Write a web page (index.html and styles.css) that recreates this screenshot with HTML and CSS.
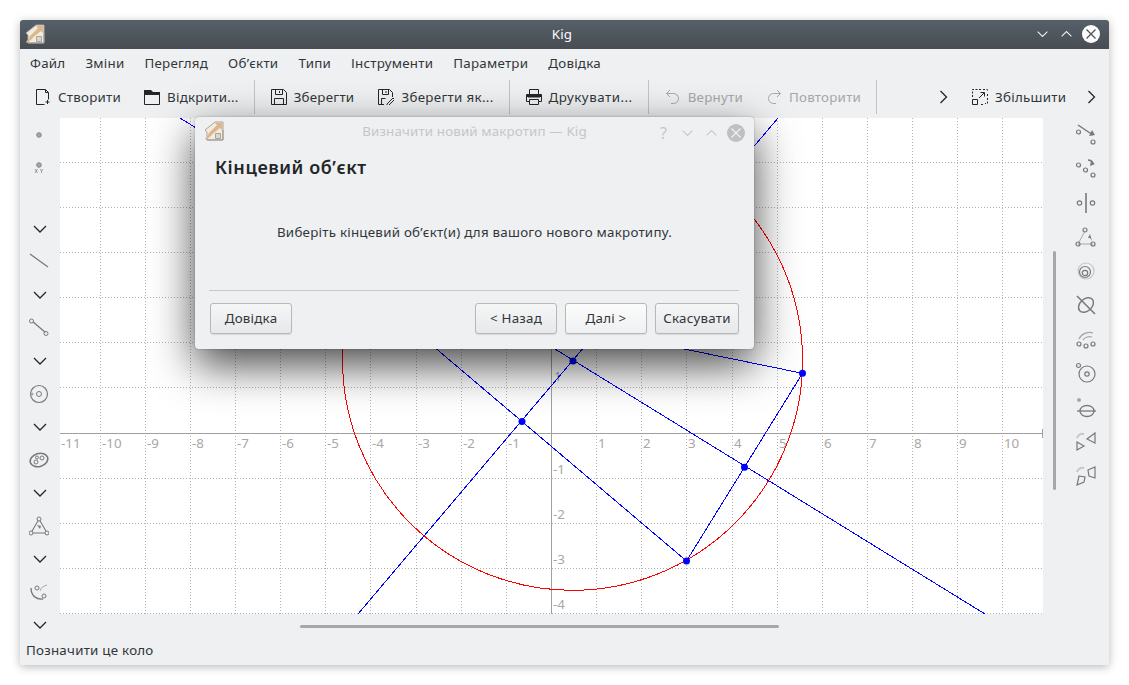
FILE: index.html
```html
<!DOCTYPE html>
<html lang="uk">
    <head>
        <meta charset="utf-8" />
        <meta name="viewport" content="width=device-width, initial-scale=1" />
        <title>Kig</title>
        <link rel="stylesheet" href="styles.css">
    </head>
    <body>
        <svg class="defs" width="0" height="0">
            <symbol id="logo" viewBox="0 0 20 20">
                <path d="M1 9 11 1h8v18H3V11z" fill="#f3ebdd" stroke="#a9a39a" stroke-width="1"/>
                <path d="M11 2h7v7l-2-2-10 8-2-2 9-9z" fill="#dcb68d"/>
                <path d="M1 18 6 12l2 2-6 5z" fill="#dcb68d"/>
                <path d="M11.500 12.500h5v5h-5z" fill="#d9d7d2" stroke="#a9a39a" stroke-width="1"/>
                <path d="M3 19h16V9" fill="none" stroke="#9a9a96" stroke-width="1"/>
            </symbol>
            <symbol id="chev-down" viewBox="0 0 16 10"><path d="M2 2l6 6 6-6" fill="none" stroke="currentColor" stroke-width="1.300"/></symbol>
            <symbol id="chev-up" viewBox="0 0 16 10"><path d="M2 8l6-6 6 6" fill="none" stroke="currentColor" stroke-width="1.300"/></symbol>
        </svg>

        <div class="window">
            <header class="titlebar">
                <svg class="logo"><use href="#logo"/></svg>
                <span class="titlebar-name">Kig</span>
                <div class="wm-buttons">
                    <svg class="wm-chev"><use href="#chev-down"/></svg>
                    <svg class="wm-chev"><use href="#chev-up"/></svg>
                    <svg class="wm-close" viewBox="0 0 18 18"><circle cx="9" cy="9" r="9" fill="#fcfcfc"/><path d="M4.500 4.500l9 9m0-9l-9 9" stroke="#4d5359" stroke-width="1.300"/></svg>
                </div>
            </header>

            <nav class="menubar">
                <span>Файл</span><span>Зміни</span><span>Перегляд</span><span>Об’єкти</span><span>Типи</span><span>Інструменти</span><span>Параметри</span><span>Довідка</span>
            </nav>

            <div class="toolbar">
                <div class="tool">
                    <svg class="tool-ico" viewBox="0 0 16 16"><path d="M1.500 15.500V.5h9l3 3v7M1.500 15.500h8M10.500.5v3h3M12.500 11v4M10.500 13h4" fill="none" stroke="#232629"/></svg>
                    <span>Створити</span>
                </div>
                <div class="tool">
                    <svg class="tool-ico" viewBox="0 0 16 16"><path d="M.5 1.500h6l2 2h7v12H.5z" fill="none" stroke="#232629"/><path d="M0 1h7l2 2h7v3H0z" fill="#232629"/></svg>
                    <span>Відкрити...</span>
                </div>
                <i class="sep"></i>
                <div class="tool">
                    <svg class="tool-ico" viewBox="0 0 16 16"><path d="M.5.5h12l3 3v12H.5zM4.500.5v5h7v-5M3.500 15.500v-6h9v6M8.500 2v2" fill="none" stroke="#232629"/></svg>
                    <span>Зберегти</span>
                </div>
                <div class="tool tool-saveas">
                    <svg class="tool-ico" viewBox="0 0 16 16"><path d="M6 15.500H.5V.5h11l3 3V8M4.500.5v5h6v-5M3.500 15.500v-6h4M8 2v2" fill="none" stroke="#232629"/><path d="M9 15l6-6 1.500 1.500-6 6H9z" fill="none" stroke="#232629"/></svg>
                    <span>Зберегти як...</span>
                </div>
                <i class="sep"></i>
                <div class="tool tool-print">
                    <svg class="tool-ico" viewBox="0 0 16 16"><path d="M3.500 5V.5h9V5M3.500 12.500h-3v-7h15v7h-3M3.500 10.500h9v5h-9zM2 8h12" fill="none" stroke="#232629"/><path d="M1 6h14v2H1z" fill="#232629"/></svg>
                    <span>Друкувати...</span>
                </div>
                <i class="sep"></i>
                <div class="tool tool-off">
                    <svg class="tool-ico" viewBox="0 0 16 16"><path d="M1.500 4.500h7a5 5 0 0 1 0 10H6M1.500 4.500 5 1M1.500 4.500 5 8" fill="none" stroke="#a5a7a9"/></svg>
                    <span>Вернути</span>
                </div>
                <div class="tool tool-off">
                    <svg class="tool-ico" viewBox="0 0 16 16"><path d="M14.500 4.500h-7a5 5 0 0 0 0 10H10M14.500 4.500 11 1M14.500 4.500 11 8" fill="none" stroke="#a5a7a9"/></svg>
                    <span>Повторити</span>
                </div>
                <i class="sep"></i>
                <svg class="more more-first" viewBox="0 0 8 14"><path d="M1 1l6 6-6 6" fill="none" stroke="#232629" stroke-width="1.300"/></svg>
                <div class="tool tool-zoom">
                    <svg class="tool-ico" viewBox="0 0 16 16"><path d="M5.500.5H.5V9M7 .5h2M11 .5h4.500V3M15.500 5v2M15.500 9v5.500H13M11 15.500H8" fill="none" stroke="#232629" stroke-dasharray="2 1.500"/><path d="M.5 10.500h5v5h-5zM7 9l5-5M8.500 3.500h4v4" fill="none" stroke="#232629"/></svg>
                    <span>Збільшити</span>
                </div>
                <svg class="more" viewBox="0 0 8 14"><path d="M1 1l6 6-6 6" fill="none" stroke="#232629" stroke-width="1.300"/></svg>
            </div>

            <div class="workspace">
                <aside class="side-left">
                    <div class="slot"><svg class="geo" viewBox="0 0 20 20"><circle cx="10" cy="10" r="2.300" fill="#a5a7a9" stroke="#85888a"/></svg></div>
                    <div class="slot"><svg class="geo" viewBox="0 0 20 20"><circle cx="10" cy="7" r="2.300" fill="#a5a7a9" stroke="#85888a"/><path d="M6 11l2.500 4m0-4L6 15M11 11l1.500 2 1.500-2m-1.500 2v2" fill="none" stroke="#77797b" stroke-width=".7"/></svg></div>
                    <div class="slot slot-gap"><svg class="chev"><use href="#chev-down"/></svg></div>
                    <div class="slot"><svg class="geo" viewBox="0 0 20 20"><path d="M1 2l18 13" stroke="#77797b" stroke-width="1.300"/></svg></div>
                    <div class="slot"><svg class="chev"><use href="#chev-down"/></svg></div>
                    <div class="slot"><svg class="geo" viewBox="0 0 20 20"><path d="M3 3l14 12" stroke="#77797b" stroke-width="1.300"/><circle cx="2.500" cy="3" r="2" fill="#eff0f1" stroke="#77797b"/><circle cx="17" cy="15.500" r="2" fill="#eff0f1" stroke="#77797b"/></svg></div>
                    <div class="slot"><svg class="chev"><use href="#chev-down"/></svg></div>
                    <div class="slot"><svg class="geo" viewBox="0 0 20 20"><circle cx="10" cy="10" r="8.500" fill="none" stroke="#77797b" stroke-width="1.200"/><circle cx="10" cy="10" r="2.500" fill="none" stroke="#77797b"/><circle cx="3" cy="10" r="1.500" fill="#a5a7a9"/></svg></div>
                    <div class="slot"><svg class="chev"><use href="#chev-down"/></svg></div>
                    <div class="slot"><svg class="geo" viewBox="0 0 20 20"><ellipse cx="10" cy="10" rx="9" ry="6.500" transform="rotate(-18 10 10)" fill="none" stroke="#77797b" stroke-width="1.600"/><circle cx="7" cy="12" r="2" fill="none" stroke="#77797b"/><circle cx="13" cy="8" r="2" fill="none" stroke="#77797b"/><circle cx="8" cy="7.500" r="1.500" fill="none" stroke="#77797b"/></svg></div>
                    <div class="slot"><svg class="chev"><use href="#chev-down"/></svg></div>
                    <div class="slot"><svg class="geo" viewBox="0 0 20 20"><path d="M10 3 2 17h16z" fill="none" stroke="#77797b" stroke-width="1.100"/><circle cx="10" cy="3" r="2" fill="#eff0f1" stroke="#77797b"/><circle cx="2" cy="17" r="2" fill="#eff0f1" stroke="#77797b"/><circle cx="18" cy="17" r="2" fill="#eff0f1" stroke="#77797b"/><path d="M8 9l4 1-1 3z" fill="#77797b"/></svg></div>
                    <div class="slot"><svg class="chev"><use href="#chev-down"/></svg></div>
                    <div class="slot"><svg class="geo" viewBox="0 0 20 20"><path d="M2 6c0 8 6 12 12 11" fill="none" stroke="#77797b" stroke-width="1.400"/><path d="M11 9c1-3 3-5 7-6" fill="none" stroke="#a5a7a9"/><circle cx="8" cy="6" r="2" fill="none" stroke="#77797b"/><circle cx="15" cy="14" r="2" fill="none" stroke="#77797b"/></svg></div>
                    <div class="slot"><svg class="chev"><use href="#chev-down"/></svg></div>
                </aside>

                <div class="centre">
                    <svg class="canvas" viewBox="60 118 983 496" xmlns="http://www.w3.org/2000/svg">
                        <g class="grid">
                            <path d="M100.500 118V614M145.500 118V614M190.500 118V614M235.500 118V614M280.500 118V614M325.500 118V614M370.500 118V614M416.500 118V614M461.500 118V614M506.500 118V614M596.500 118V614M641.500 118V614M686.500 118V614M732.500 118V614M777.500 118V614M822.500 118V614M867.500 118V614M912.500 118V614M957.500 118V614M1002.500 118V614"/>
                            <path d="M60 162.500H1043M60 207.500H1043M60 252.500H1043M60 297.500H1043M60 342.500H1043M60 387.500H1043M60 478.500H1043M60 523.500H1043M60 568.500H1043M60 613.500H1043"/>
                        </g>
                        <path class="axis" d="M60 433.500H1043M551.500 118V614M1042.500 429V438"/>
                        <g class="num">
                            <text x="61" y="448">-11</text><text x="102" y="448">-10</text><text x="147" y="448">-9</text><text x="192" y="448">-8</text><text x="237" y="448">-7</text><text x="282" y="448">-6</text><text x="327" y="448">-5</text><text x="372" y="448">-4</text><text x="418" y="448">-3</text><text x="463" y="448">-2</text><text x="508" y="448">-1</text>
                            <text x="598" y="448">1</text><text x="643" y="448">2</text><text x="688" y="448">3</text><text x="734" y="448">4</text><text x="779" y="448">5</text><text x="824" y="448">6</text><text x="869" y="448">7</text><text x="914" y="448">8</text><text x="959" y="448">9</text><text x="1004" y="448">10</text>
                            <text x="554" y="381">1</text><text x="553" y="474">-1</text><text x="553" y="519">-2</text><text x="553" y="564">-3</text><text x="553" y="609">-4</text>
                        </g>
                        <circle class="curve" cx="572.600" cy="360.300" r="230"/>
                        <g class="lines">
                            <path d="M180 118 985 614M358 614 778 118"/>
                            <path d="M357.500 282 802.500 373.300 686.500 561z"/>
                        </g>
                        <g class="dots">
                            <circle cx="802.500" cy="373.300" r="3.500"/><circle cx="686.500" cy="561" r="3.500"/><circle cx="744.500" cy="467.300" r="3.500"/><circle cx="522" cy="421.500" r="3.500"/><circle cx="573" cy="361" r="3.500"/>
                        </g>
                    </svg>
                    <div class="hscroll"></div>
                </div>

                <aside class="side-right">
                    <div class="vscroll"></div>
                    <div class="side-right-icons">
                        <div class="slot-r"><svg class="geo" viewBox="0 0 22 22"><path d="M3 1l15 10" stroke="#77797b" stroke-width="1.500"/><path d="M14 12l6-1-3-5z" fill="#77797b"/><circle cx="3.500" cy="8" r="2" fill="none" stroke="#77797b"/><circle cx="18" cy="18" r="2" fill="none" stroke="#77797b"/></svg></div>
                        <div class="slot-r"><svg class="geo" viewBox="0 0 22 22"><circle cx="3.500" cy="7" r="2" fill="none" stroke="#77797b"/><circle cx="10.500" cy="12" r="2" fill="none" stroke="#77797b"/><circle cx="18" cy="17" r="2" fill="none" stroke="#77797b"/><path d="M13 2c3 0 4 1 5 3" fill="none" stroke="#77797b" stroke-width="1.500"/><path d="M15 8l5-2-4-3z" fill="#77797b"/></svg></div>
                        <div class="slot-r"><svg class="geo" viewBox="0 0 22 22"><path d="M11 1v20" stroke="#77797b" stroke-width="1.600"/><circle cx="4.500" cy="11" r="2.200" fill="none" stroke="#77797b"/><circle cx="17.500" cy="11" r="2.200" fill="none" stroke="#77797b"/></svg></div>
                        <div class="slot-r"><svg class="geo" viewBox="0 0 22 22"><path d="M10 5 3 18h15" fill="none" stroke="#a5a7a9"/><circle cx="10" cy="4" r="2" fill="none" stroke="#77797b"/><circle cx="3" cy="18" r="2" fill="none" stroke="#77797b"/><circle cx="18" cy="18" r="2" fill="none" stroke="#77797b"/><path d="M15 8l2 7-2-3-2 0z" fill="#77797b"/></svg></div>
                        <div class="slot-r"><svg class="geo" viewBox="0 0 22 22"><circle cx="11" cy="11" r="8" fill="none" stroke="#c4c6c8"/><circle cx="10" cy="12" r="5.500" fill="none" stroke="#77797b" stroke-width="1.500"/><circle cx="10" cy="13" r="2.700" fill="none" stroke="#77797b" stroke-width="1.500"/></svg></div>
                        <div class="slot-r"><svg class="geo" viewBox="0 0 22 22"><ellipse cx="11" cy="11" rx="8.500" ry="6" transform="rotate(-42 11 11)" fill="none" stroke="#77797b" stroke-width="1.500"/><path d="M2 2l18 18" stroke="#77797b" stroke-width="1.600"/></svg></div>
                        <div class="slot-r"><svg class="geo" viewBox="0 0 22 22"><path d="M4 11c2-5 9-8 14-6M8 12c2-3 6-4 9-3" fill="none" stroke="#a5a7a9" stroke-width="1.200"/><circle cx="4" cy="16" r="2" fill="none" stroke="#77797b"/><circle cx="11" cy="18" r="2" fill="none" stroke="#77797b"/><circle cx="18" cy="16" r="2" fill="none" stroke="#77797b"/></svg></div>
                        <div class="slot-r"><svg class="geo" viewBox="0 0 22 22"><circle cx="12" cy="12" r="8" fill="none" stroke="#77797b" stroke-width="1.500"/><circle cx="12" cy="12" r="2.200" fill="none" stroke="#77797b"/><circle cx="3.500" cy="3.500" r="2" fill="none" stroke="#77797b"/></svg></div>
                        <div class="slot-r"><svg class="geo" viewBox="0 0 22 22"><ellipse cx="12" cy="15" rx="7" ry="5.500" fill="none" stroke="#77797b" stroke-width="1.300"/><path d="M2 15h19" stroke="#77797b" stroke-width="1.300"/><circle cx="4" cy="4" r="2" fill="#a5a7a9"/></svg></div>
                        <div class="slot-r"><svg class="geo" viewBox="0 0 22 22"><path d="M20 3 12 9l8 4z" fill="none" stroke="#77797b" stroke-width="1.200"/><path d="M2 12l7 4-7 4z" fill="none" stroke="#77797b" stroke-width="1.200"/><path d="M2 8c1-3 4-5 7-4" fill="none" stroke="#c4c6c8" stroke-width="2"/></svg></div>
                        <div class="slot-r"><svg class="geo" viewBox="0 0 22 22"><path d="M13 6l7-3v11l-6-2z" fill="none" stroke="#77797b" stroke-width="1.200"/><path d="M4 12l6 1-1 5-7 3z" fill="none" stroke="#77797b" stroke-width="1.200"/><path d="M2 8c1-3 4-5 7-4" fill="none" stroke="#c4c6c8" stroke-width="2"/></svg></div>
                    </div>
                </aside>
            </div>

            <footer class="statusbar">Позначити це коло</footer>

            <section class="dialog">
                <div class="dialog-title">
                    <svg class="logo"><use href="#logo"/></svg>
                    <span class="dialog-name">Визначити новий макротип — Kig</span>
                    <div class="wm-buttons">
                        <span class="wm-help">?</span>
                        <svg class="wm-chev"><use href="#chev-down"/></svg>
                        <svg class="wm-chev"><use href="#chev-up"/></svg>
                        <svg class="wm-close" viewBox="0 0 18 18"><circle cx="9" cy="9" r="9" fill="#bdc1c4"/><path d="M4.500 4.500l9 9m0-9l-9 9" stroke="#eff0f1" stroke-width="1.300"/></svg>
                    </div>
                </div>
                <h2 class="dialog-head">Кінцевий об’єкт</h2>
                <p class="dialog-text">Виберіть кінцевий об’єкт(и) для вашого нового макротипу.</p>
                <hr class="dialog-rule">
                <div class="dialog-buttons">
                    <button class="btn">Довідка</button>
                    <span class="btn-space"></span>
                    <button class="btn">&lt; Назад</button>
                    <button class="btn btn-default">Далі &gt;</button>
                    <button class="btn btn-wide">Скасувати</button>
                </div>
            </section>
        </div>
    </body>
</html>
```

FILE: styles.css
```css
* { box-sizing: border-box; margin: 0; padding: 0; }
html, body { height: 100%; overflow: hidden; }
body {
    background: #fff;
    padding: 20px;
    font-family: "Noto Sans", "Open Sans", sans-serif;
    font-size: 13.33px;
    letter-spacing: .25px;
    color: #31363b;
}
.defs { position: absolute; }

.window {
    position: relative;
    width: 1089px;
    height: 645px;
    display: flex;
    flex-direction: column;
    background: #eff0f1;
    border-radius: 3px 3px 2px 2px;
    box-shadow: 0 2px 10px rgba(0, 0, 0, .28);
}

/* title bar */
.titlebar {
    position: relative;
    height: 29px;
    flex: none;
    display: flex;
    align-items: center;
    justify-content: center;
    padding: 0 5px 2px 0;
    background: linear-gradient(#566069, #474d52);
    border-radius: 3px 3px 0 0;
    color: #fcfcfc;
}
.logo { position: absolute; left: 5px; top: 4px; width: 20px; height: 20px; }
.wm-buttons {
    position: absolute;
    right: 9px;
    top: 5px;
    display: flex;
    align-items: center;
    gap: 11px;
    color: #eff0f1;
}
.wm-chev { width: 13px; height: 18px; }
.wm-close { width: 18px; height: 18px; margin-left: -2px; }

/* menu */
.menubar {
    height: 29px;
    flex: none;
    display: flex;
    align-items: center;
    padding: 0 0 2px 10px;
    gap: 20px;
}

/* toolbar */
.toolbar {
    height: 40px;
    flex: none;
    display: flex;
    align-items: center;
    padding: 0 0 3px 4px;
}
.tool {
    display: flex;
    align-items: center;
    gap: 7px;
    padding: 0 11px;
    white-space: nowrap;
}
.tool + .tool { margin-left: 1px; }
.tool-ico { width: 16px; height: 16px; flex: none; }
.tool-off { color: #a5a7a9; }
.tool + .tool-saveas { margin-left: 2px; letter-spacing: .32px; }
.tool-print { letter-spacing: .5px; }
.sep { width: 1px; height: 34px; background: #c2c4c5; margin: 0 5px 0 4px; }
.more { width: 9px; height: 14px; flex: none; }
.more-first { margin-left: 57px; }
.tool-zoom { margin-left: 13px; margin-right: 10px; }

/* main area */
.workspace { flex: 1; display: flex; min-height: 0; }
.side-left { width: 40px; flex: none; }
.slot { height: 33px; display: flex; align-items: center; justify-content: center; }
.slot-gap { margin-top: 28px; }
.geo { width: 20px; height: 20px; margin-left: -2px; }
.chev { width: 16px; height: 10px; margin-left: -1px; color: #232629; }

.centre { width: 983px; flex: none; }
.canvas { display: block; width: 983px; height: 496px; background: #fff; }
.grid path { fill: none; stroke: #b4b4b4; stroke-dasharray: 1 2; shape-rendering: crispEdges; }
.axis { fill: none; stroke: #a0a0a0; shape-rendering: crispEdges; }
.num text { font-size: 13.33px; letter-spacing: 0; fill: #a8a8a8; }
.curve { fill: none; stroke: #ff0000; stroke-width: 1; shape-rendering: crispEdges; }
.lines path { fill: none; stroke: #0000ff; stroke-width: 1; shape-rendering: crispEdges; }
.dots circle { fill: #0000ff; }
.hscroll { width: 479px; height: 3px; margin: 11px 0 0 240px; background: #a5a7a8; border-radius: 2px; }

.side-right { flex: 1; display: flex; }
.vscroll { width: 3px; height: 239px; margin: 133px 0 0 10px; background: #a5a7a8; border-radius: 2px; }
.side-right-icons { width: 46px; margin-left: 7px; }
.slot-r { height: 34px; display: flex; align-items: center; justify-content: center; }
.slot-r .geo { width: 22px; height: 22px; margin: 0; }
.slot-r circle { stroke-width: 1.200; }

.statusbar { height: 27px; flex: none; padding: 3px 0 0 6px; }

/* dialog */
.dialog {
    position: absolute;
    left: 175px;
    top: 97px;
    width: 559px;
    height: 232px;
    display: flex;
    flex-direction: column;
    background: #eff0f1;
    border-radius: 4px;
    box-shadow: 0 16px 44px rgba(0, 0, 0, .72), 0 0 2px rgba(0, 0, 0, .3);
}
.dialog-title {
    position: relative;
    height: 29px;
    flex: none;
    display: flex;
    align-items: center;
    justify-content: center;
    padding-bottom: 2px;
    letter-spacing: .15px;
    color: #c4c7c9;
}
.dialog-title .logo { left: 9px; top: 4px; }
.dialog-title .wm-buttons { color: #c4c7c9; right: 9px; top: 5px; }
.wm-help { font-size: 16px; width: 13px; text-align: center; }
.dialog-head { font-size: 18px; font-weight: 600; letter-spacing: .55px; color: #232629; line-height: 24px; margin: 9px 0 0 20px; }
.dialog-text { text-align: center; line-height: 18px; margin-top: 44px; }
.dialog-rule { border: 0; height: 1px; background: #c6c8c9; margin: 49px 15px 0 14px; }
.dialog-buttons { display: flex; gap: 8px; margin: 12px 15px 0 15px; }
.btn-space { flex: 1; }
.btn {
    width: 82px;
    height: 31px;
    padding-bottom: 2px;
    font: inherit;
    letter-spacing: inherit;
    color: #31363b;
    background: linear-gradient(#f5f6f6, #e7e8e9);
    border: 1px solid #b6b8b9;
    border-radius: 3px;
    box-shadow: 0 1px 1px rgba(0, 0, 0, .1);
}
.btn-default { background: linear-gradient(#fcfcfc, #eff0f1); }
.btn-wide { width: 84px; }
```
